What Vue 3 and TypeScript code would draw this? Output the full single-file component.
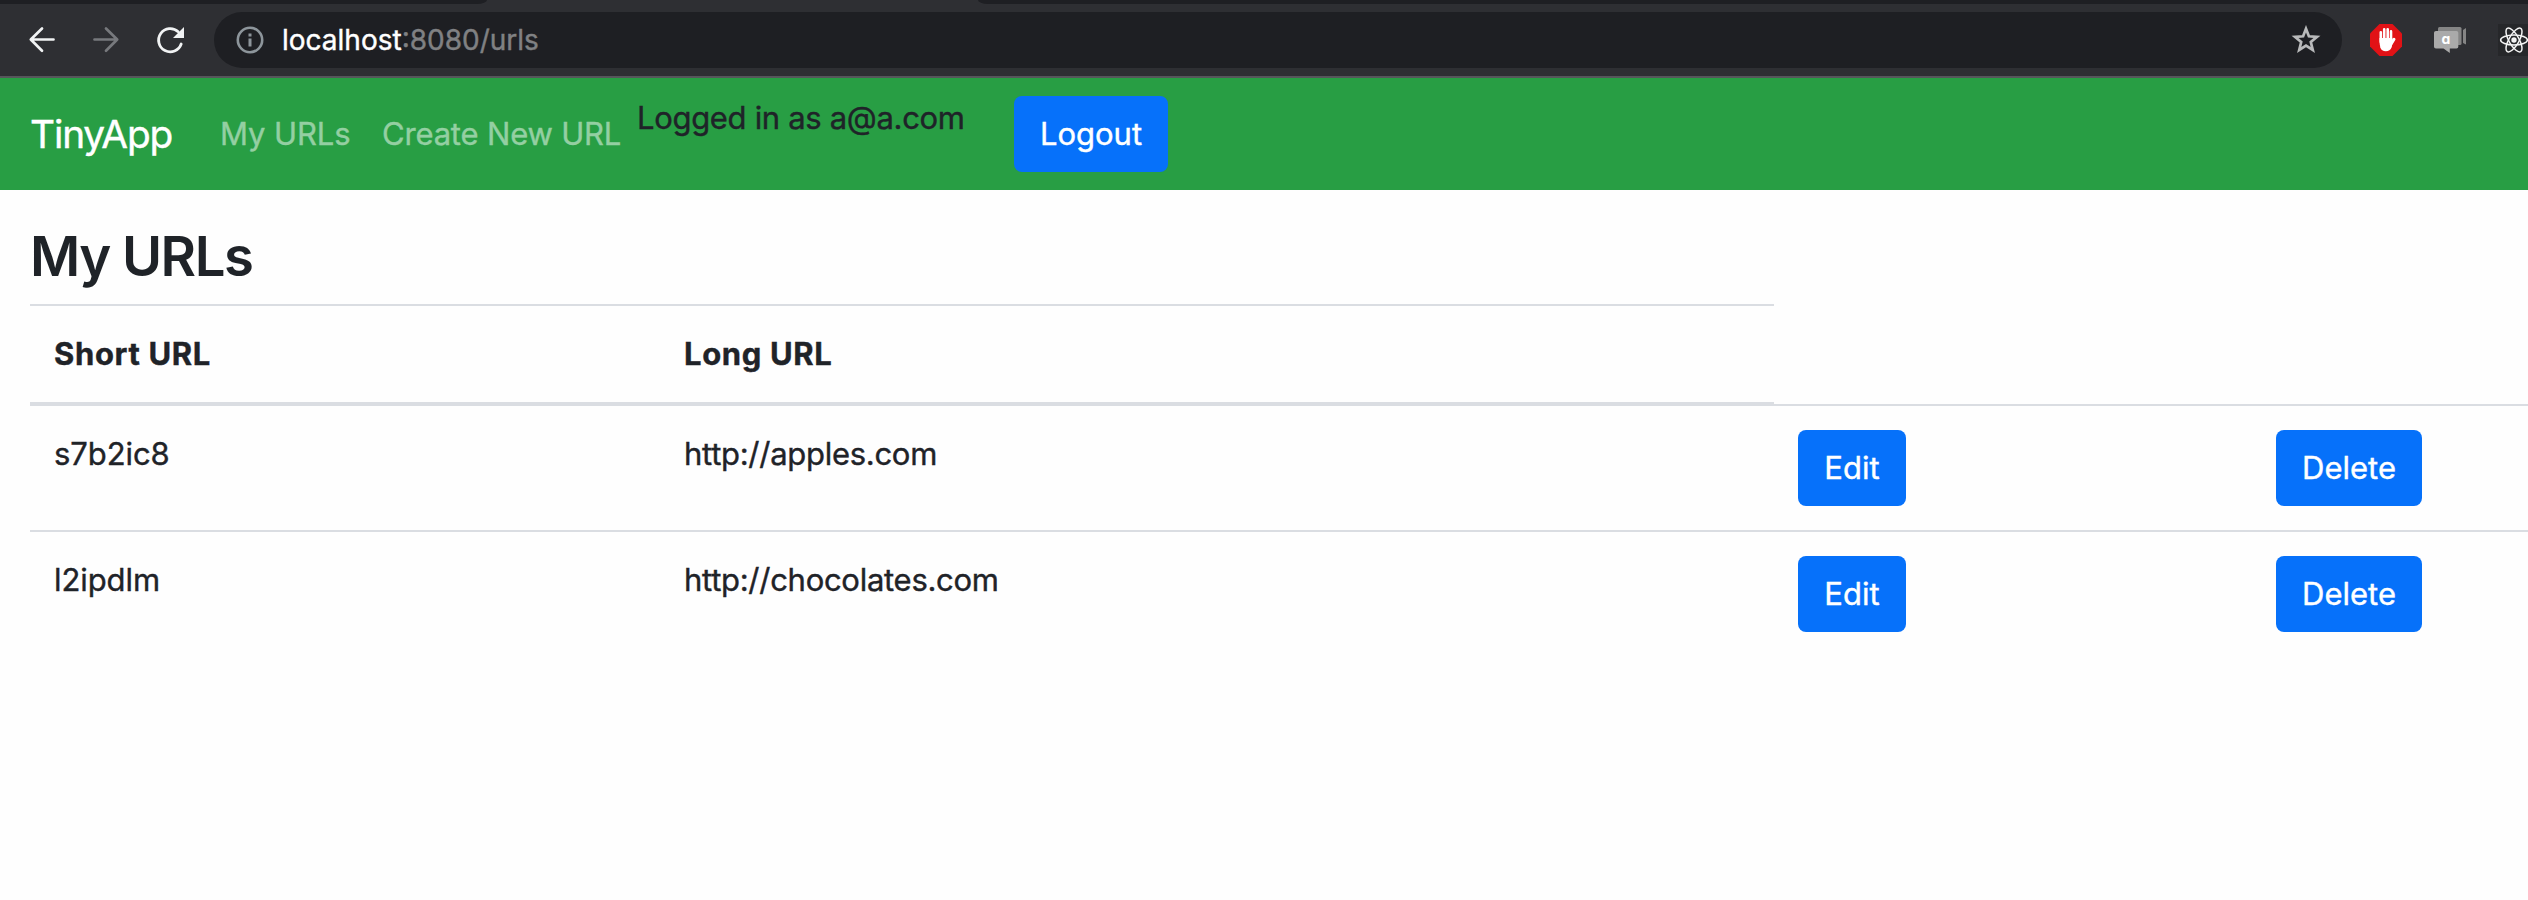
<script setup lang="ts">
interface UrlRow {
  short: string
  long: string
}

const rows: UrlRow[] = [
  { short: 's7b2ic8', long: 'http://apples.com' },
  { short: 'l2ipdlm', long: 'http://chocolates.com' },
]
</script>

<template>
  <div class="window">
    <div class="tabs">
      <span class="tab-left"></span>
      <span class="tab-right"></span>
    </div>
    <div class="toolbar">
      <div class="controls">
        <svg class="icon" viewBox="0 0 32 32" fill="none" stroke="#f1f3f4" stroke-width="2.7" stroke-linecap="round" stroke-linejoin="round">
          <path d="M27.5 15.5H5.2M16 4.5L4.8 15.5L16 26.7" />
        </svg>
        <svg class="icon" viewBox="0 0 32 32" fill="none" stroke="#77797d" stroke-width="2.7" stroke-linecap="round" stroke-linejoin="round">
          <path d="M4.5 15.5H26.8M16 4.5L27.2 15.5L16 26.7" />
        </svg>
        <svg class="icon" viewBox="0 0 32 32" fill="none">
          <path d="M24.2 7.8A11.6 11.6 0 1 0 27.2 20" stroke="#f1f3f4" stroke-width="2.8" stroke-linecap="round" />
          <path d="M30 3V14H19Z" fill="#f1f3f4" />
        </svg>
      </div>
      <div class="address">
        <svg class="info" viewBox="0 0 28 28">
          <circle cx="14" cy="14" r="12.2" fill="none" stroke="#8d959b" stroke-width="2.6" />
          <path d="M12.5 7.6h3v3h-3zM12.5 12.6h3v8h-3z" fill="#8d959b" />
        </svg>
        <span class="host">localhost</span><span class="path">:8080/urls</span>
        <svg class="star" viewBox="0 0 30 30">
          <path d="M15 3.7L17.9 11.3L26 11.8L19.8 17L21.8 24.9L15 20.5L8.2 24.9L10.2 17L4 11.8L12.1 11.3Z" fill="none" stroke="#b9babb" stroke-width="2.7" />
        </svg>
      </div>
      <div class="extensions">
        <svg class="ext" viewBox="0 0 32 32">
          <path d="M9.5 0H22.5L32 9.5V22.5L22.5 32H9.5L0 22.5V9.5Z" fill="#e11216" />
          <g fill="none" stroke="#fff" stroke-width="2.6" stroke-linecap="round">
            <path d="M10.8 18V8.2M14.2 16V5.4M17.7 16V5.2M21 17V7.4" />
            <path d="M20.8 20.5L24 15.3" stroke-width="3" />
          </g>
          <path d="M9.5 14H22.3V19L21.8 23Q20 27.3 15.8 27.3Q11.6 27.3 10.3 23.5Q9.5 20 9.5 16Z" fill="#fff" />
        </svg>
        <svg class="ext" viewBox="0 0 32 32">
          <path d="M5.5 3H26Q27.5 3 27.5 4.5V19.5Q27.5 21 26 21H4V4.5Q4 3 5.5 3Z" fill="#858585" />
          <path d="M29 6L32 4V20.5L29 19Z" fill="#858585" />
          <path d="M2 7H22.5Q24.3 7 24.3 8.8V22.7Q24.3 24.5 22.5 24.5H15.8V29L9.5 24.5H2Q0 24.5 0 22.7V8.8Q0 7 2 7Z" fill="#aaa" />
          <text x="12" y="20" text-anchor="middle" class="alpha">ɑ</text>
        </svg>
        <svg class="ext" viewBox="0 0 32 32">
          <rect width="32" height="32" fill="#26272a" />
          <g fill="none" stroke="#f4f4f4" stroke-width="1.5">
            <ellipse cx="16" cy="16" rx="13.4" ry="5" />
            <ellipse cx="16" cy="16" rx="13.4" ry="5" transform="rotate(60 16 16)" />
            <ellipse cx="16" cy="16" rx="13.4" ry="5" transform="rotate(120 16 16)" />
          </g>
          <circle cx="16" cy="16" r="2.7" fill="#f4f4f4" />
        </svg>
      </div>
    </div>

    <nav class="navbar">
      <a class="brand">TinyApp</a>
      <a class="link first">My URLs</a>
      <a class="link second">Create New URL</a>
      <span class="user">Logged in as a@a.com</span>
      <button class="btn logout" type="button">Logout</button>
    </nav>

    <main>
      <h3>My URLs</h3>
      <table>
        <colgroup>
          <col class="c-short" />
          <col class="c-long" />
          <col class="c-edit" />
          <col class="c-delete" />
        </colgroup>
        <thead>
          <tr>
            <th>Short URL</th>
            <th>Long URL</th>
          </tr>
        </thead>
        <tbody>
          <tr v-for="row in rows" :key="row.short">
            <td>{{ row.short }}</td>
            <td class="long">{{ row.long }}</td>
            <td><button class="btn edit" type="button">Edit</button></td>
            <td><button class="btn delete" type="button">Delete</button></td>
          </tr>
        </tbody>
      </table>
    </main>
  </div>
</template>

<style>
body {
  margin: 0;
  overflow: hidden;
}
</style>

<style scoped>
* {
  box-sizing: border-box;
}
.window {
  width: 2528px;
  height: 900px;
  overflow: hidden;
  background: #fefefe;
  color: #1f2328;
  font-family: Inter, "Liberation Sans", sans-serif;
  font-size: 31px;
  -webkit-text-stroke-width: 0.4px;
}
.tabs {
  display: flex;
  justify-content: space-between;
  height: 4px;
  background: #2e2f33;
}
.tab-left,
.tab-right {
  background: #1e1f23;
}
.tab-left {
  width: 487px;
  border-bottom-right-radius: 10px 4px;
}
.tab-right {
  width: 1550px;
  border-bottom-left-radius: 10px 4px;
}
.toolbar {
  display: flex;
  align-items: flex-start;
  height: 74px;
  padding-top: 8px;
  background: #2e2f33;
  border-bottom: 2px solid #56565b;
}
.controls {
  display: flex;
  flex: none;
  gap: 32px;
  width: 214px;
  padding: 12px 0 0 26px;
}
.icon,
.ext {
  display: block;
  flex: none;
  width: 32px;
  height: 32px;
}
.address {
  display: flex;
  flex: none;
  align-items: center;
  width: 2128px;
  height: 56px;
  padding: 0 21px 0 22px;
  border-radius: 28px;
  background: #1e1f23;
  font-size: 28px;
  line-height: 56px;
}
.info {
  width: 28px;
  height: 28px;
  margin-right: 18px;
}
.host {
  color: #fff;
}
.path {
  color: #808183;
}
.star {
  width: 30px;
  height: 30px;
  margin-left: auto;
}
.extensions {
  display: flex;
  flex: none;
  gap: 32px;
  padding: 12px 0 0 28px;
}
.alpha {
  fill: #fff;
  font: bold 14px Inter, sans-serif;
}
.navbar {
  display: flex;
  align-items: flex-start;
  height: 112px;
  padding: 18px 30px;
  background: #289e44;
  line-height: 48px;
  white-space: nowrap;
}
.brand {
  width: 190px;
  color: #fff;
  font-size: 38.8px;
  line-height: 76px;
  letter-spacing: -1.15px;
}
.link {
  color: #94cfa2;
  line-height: 76px;
}
.first {
  width: 162px;
  letter-spacing: -0.1px;
}
.second {
  width: 255px;
  letter-spacing: -0.18px;
}
.user {
  width: 377px;
  line-height: 44px;
  letter-spacing: -0.32px;
}
.btn {
  display: block;
  height: 76px;
  padding: 0;
  border: 0;
  border-radius: 8px;
  background: #0671fa;
  color: #fff;
  font: inherit;
  line-height: 76px;
  text-align: center;
}
.logout {
  width: 154px;
}
.edit {
  width: 108px;
}
.delete {
  width: 146px;
}
main {
  padding: 32px 0 0 30px;
}
h3 {
  height: 82px;
  margin: 0;
  font-size: 54.5px;
  font-weight: 600;
  line-height: 68px;
  letter-spacing: -1.5px;
  -webkit-text-stroke-width: 0;
}
table {
  width: 2700px;
  table-layout: fixed;
  border-spacing: 0;
}
.c-short {
  width: 630px;
}
.c-long {
  width: 1114px;
}
.c-edit {
  width: 478px;
}
.c-delete {
  width: 478px;
}
th,
td {
  padding: 24px;
  border-top: 2px solid #dadde2;
  line-height: 48px;
  text-align: left;
  vertical-align: top;
}
td {
  height: 126px;
  letter-spacing: -0.08px;
}
.long {
  letter-spacing: -0.28px;
}
th {
  height: 100px;
  border-bottom: 2px solid #dadde2;
  font-weight: 700;
  letter-spacing: 0.65px;
}
</style>
